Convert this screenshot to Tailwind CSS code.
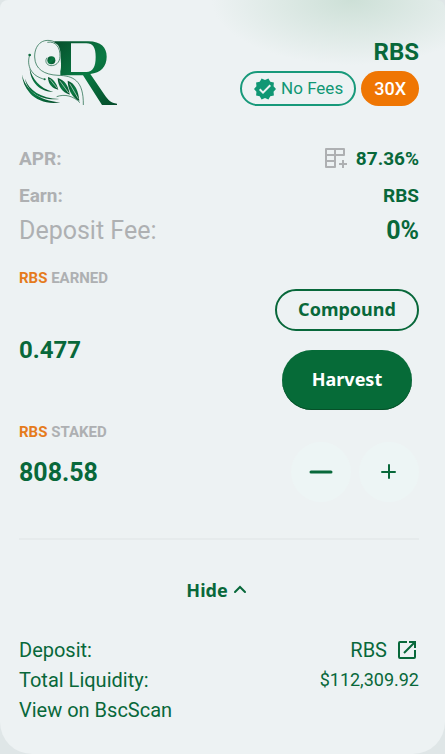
<!DOCTYPE html>
<html lang="en">
  <head>
    <meta charset="utf-8" />
    <meta name="viewport" content="width=device-width, initial-scale=1" />
    <title>RBS Farm</title>
    <script src="https://cdn.jsdelivr.net/npm/@tailwindcss/browser@4"></script>
  </head>
  <body class="bg-[#dfe6e7]">
    <main class="min-h-screen rounded-t-lg rounded-b-[32px] bg-[#edf2f3] bg-[radial-gradient(ellipse_140px_65px_at_79%_0px,#cde0d7,transparent)] pt-9 pr-[26px] pb-7 pl-[19px] font-['Roboto',sans-serif] text-xl text-[#08683a]">
      <!-- Token header -->
      <header class="flex justify-between">
        <svg class="mt-[3px] ml-px h-[68px] w-[100px]" viewBox="30 39 300 204" fill="none" role="img" aria-label="RBS logo">
          <defs>
            <linearGradient id="leaf" x1="0" y1="0" x2="1" y2="1">
              <stop offset="0" stop-color="#064f2c" />
              <stop offset=".5" stop-color="#0a7a43" />
              <stop offset="1" stop-color="#044a29" />
            </linearGradient>
          </defs>
          <g fill="url(#leaf)">
            <path fill-rule="evenodd" d="M133 46H235C273 46 290 65 290 92C290 122 272 140 241 144L284 207C294 222 303 231 321 233V237H276L219 148H151V136C155 122 152 104 152 93C152 70 147 54 133 50ZM183 52V138H229C249 138 257 122 257 93C257 65 249 52 229 52Z" />
            <circle cx="124" cy="103" r="12" />
            <circle cx="59" cy="87" r="4" />
            <circle cx="104" cy="160" r="3" />
            <path d="M114 153C130 158 139 171 145 191C126 188 114 174 114 153Z" />
            <path d="M143 156C164 162 176 180 179 206C156 199 144 181 143 156Z" />
            <path d="M173 164C196 172 205 194 208 225C185 213 174 191 173 164Z" />
            <path d="M59 127C66 158 88 187 130 198C91 198 61 170 59 127Z" />
            <path d="M45 158C57 193 92 216 148 219C91 224 52 198 45 158Z" />
            <path d="M36 145C45 190 86 225 151 229C115 235 80 225 60 202C45 185 37 165 36 145Z" />
          </g>
          <g stroke="#0b5c38" stroke-width="2">
            <path d="M133 47C96 33 73 59 74 93C75 130 103 146 144 148C190 149 221 163 220 237" />
            <path d="M112 49C137 44 151 65 150 91C149 111 137 119 123 119C108 118 104 104 111 95" />
            <path d="M59 87C49 119 63 150 104 160" />
            <path d="M140 212C165 203 190 210 210 230" />
          </g>
          <path d="M119 159L142 187M149 164L176 201M179 173L205 218" stroke="#dcebe3" stroke-width="2" />
        </svg>
        <div class="flex flex-col items-end gap-[3px]">
          <h1 class="text-2xl leading-8 font-bold">RBS</h1>
          <div class="flex gap-[5px]">
            <span class="flex h-[35px] items-center gap-1 rounded-full border-2 border-[#17997a] px-[11px] text-[17px] text-[#109774]">
              <svg class="size-6" viewBox="0 0 24 24" fill="currentColor" aria-hidden="true">
                <path d="M23 12l-2.44-2.78.34-3.68-3.61-.82-1.89-3.18L12 3 8.6 1.54 6.71 4.72l-3.61.81.34 3.68L1 12l2.44 2.78-.34 3.69 3.61.82 1.89 3.18L12 21l3.4 1.46 1.89-3.18 3.61-.82-.34-3.68L23 12zm-13 5l-4-4 1.41-1.41L10 14.17l6.59-6.59L18 9l-8 8z" />
              </svg>
              No Fees
            </span>
            <span class="flex h-[35px] items-center rounded-full bg-[#ef7603] px-[13px] text-lg font-medium text-white">30X</span>
          </div>
        </div>
      </header>

      <!-- Pool details -->
      <dl class="mt-[34px]">
        <div class="flex h-9 items-center justify-between text-[19px] font-bold">
          <dt class="text-[#aeb0b2]">APR:</dt>
          <dd class="flex items-center gap-2">
            <button class="text-[#aeb0b2]" aria-label="Open ROI calculator">
              <svg class="size-6" viewBox="0 0 24 24" fill="none" stroke="currentColor" stroke-width="2" stroke-linejoin="round" aria-hidden="true">
                <path d="M2 2h18v6H2zM2 8v12h9V2M2 14h9M19 13v8M15 17h8" />
              </svg>
            </button>
            87.36%
          </dd>
        </div>
        <div class="flex h-[38px] items-center justify-between text-[19px] font-bold">
          <dt class="text-[#aeb0b2]">Earn:</dt>
          <dd>RBS</dd>
        </div>
        <div class="flex h-[30px] items-center justify-between text-[25px]">
          <dt class="text-[#aeb0b2]">Deposit Fee:</dt>
          <dd class="font-bold">0%</dd>
        </div>
      </dl>

      <!-- Earned -->
      <h2 class="mt-[23px] text-[15px] leading-5 font-bold text-[#aeb0b2]"><span class="text-[#e57b1c]">RBS</span> EARNED</h2>
      <div class="mt-px flex items-center justify-between">
        <p class="text-2xl font-bold">0.477</p>
        <div class="flex flex-col items-center gap-[19px] font-['Noto_Sans',sans-serif] text-lg font-bold">
          <button class="h-[42px] w-36 rounded-full border-2 border-[#08683a] pb-0.5">Compound</button>
          <button class="h-[60px] w-[130px] rounded-full bg-[#066b38] pb-0.5 text-white shadow-[inset_0_-1px_0_#075029]">Harvest</button>
        </div>
      </div>

      <!-- Staked -->
      <h2 class="mt-3 text-[15px] leading-5 font-bold text-[#aeb0b2]"><span class="text-[#e57b1c]">RBS</span> STAKED</h2>
      <div class="flex items-center justify-between">
        <p class="text-[25px] font-bold">808.58</p>
        <div class="flex gap-2">
          <button class="grid size-[60px] place-items-center rounded-full bg-[#edf5f5]" aria-label="Unstake">
            <svg class="size-6" viewBox="0 0 24 24" fill="none" stroke="currentColor" stroke-width="3" stroke-linecap="round" aria-hidden="true"><path d="M2 12h20" /></svg>
          </button>
          <button class="grid size-[60px] place-items-center rounded-full bg-[#edf5f5]" aria-label="Stake">
            <svg class="size-6" viewBox="0 0 24 24" fill="none" stroke="currentColor" stroke-width="2" stroke-linecap="round" aria-hidden="true"><path d="M5 12h13M12 5v13" /></svg>
          </button>
        </div>
      </div>

      <hr class="mt-9 border-t-2 border-[#e6ebec]" />

      <button class="mx-auto mt-9 flex items-center gap-1 pr-1 font-['Noto_Sans',sans-serif] text-lg font-bold">
        Hide
        <svg class="size-4" viewBox="0 0 16 16" fill="none" stroke="currentColor" stroke-width="2" stroke-linecap="round" aria-hidden="true"><path d="M3 10l5-5 5 5" /></svg>
      </button>

      <!-- Links -->
      <div class="mt-[31px] leading-[30px]">
        <div class="flex justify-between">
          <span>Deposit:</span>
          <a href="#" class="flex items-center gap-2">
            RBS
            <svg class="size-6" viewBox="0 0 24 24" fill="none" stroke="currentColor" stroke-width="2" aria-hidden="true"><path d="M12 4H5a1 1 0 0 0-1 1v14a1 1 0 0 0 1 1h14a1 1 0 0 0 1-1v-7M14 4h6v6M20 4L9 15" /></svg>
          </a>
        </div>
        <div class="flex justify-between">
          <span>Total Liquidity:</span>
          <span class="text-lg leading-[30px]">$112,309.92</span>
        </div>
        <a href="#">View on BscScan</a>
      </div>
    </main>
  </body>
</html>
